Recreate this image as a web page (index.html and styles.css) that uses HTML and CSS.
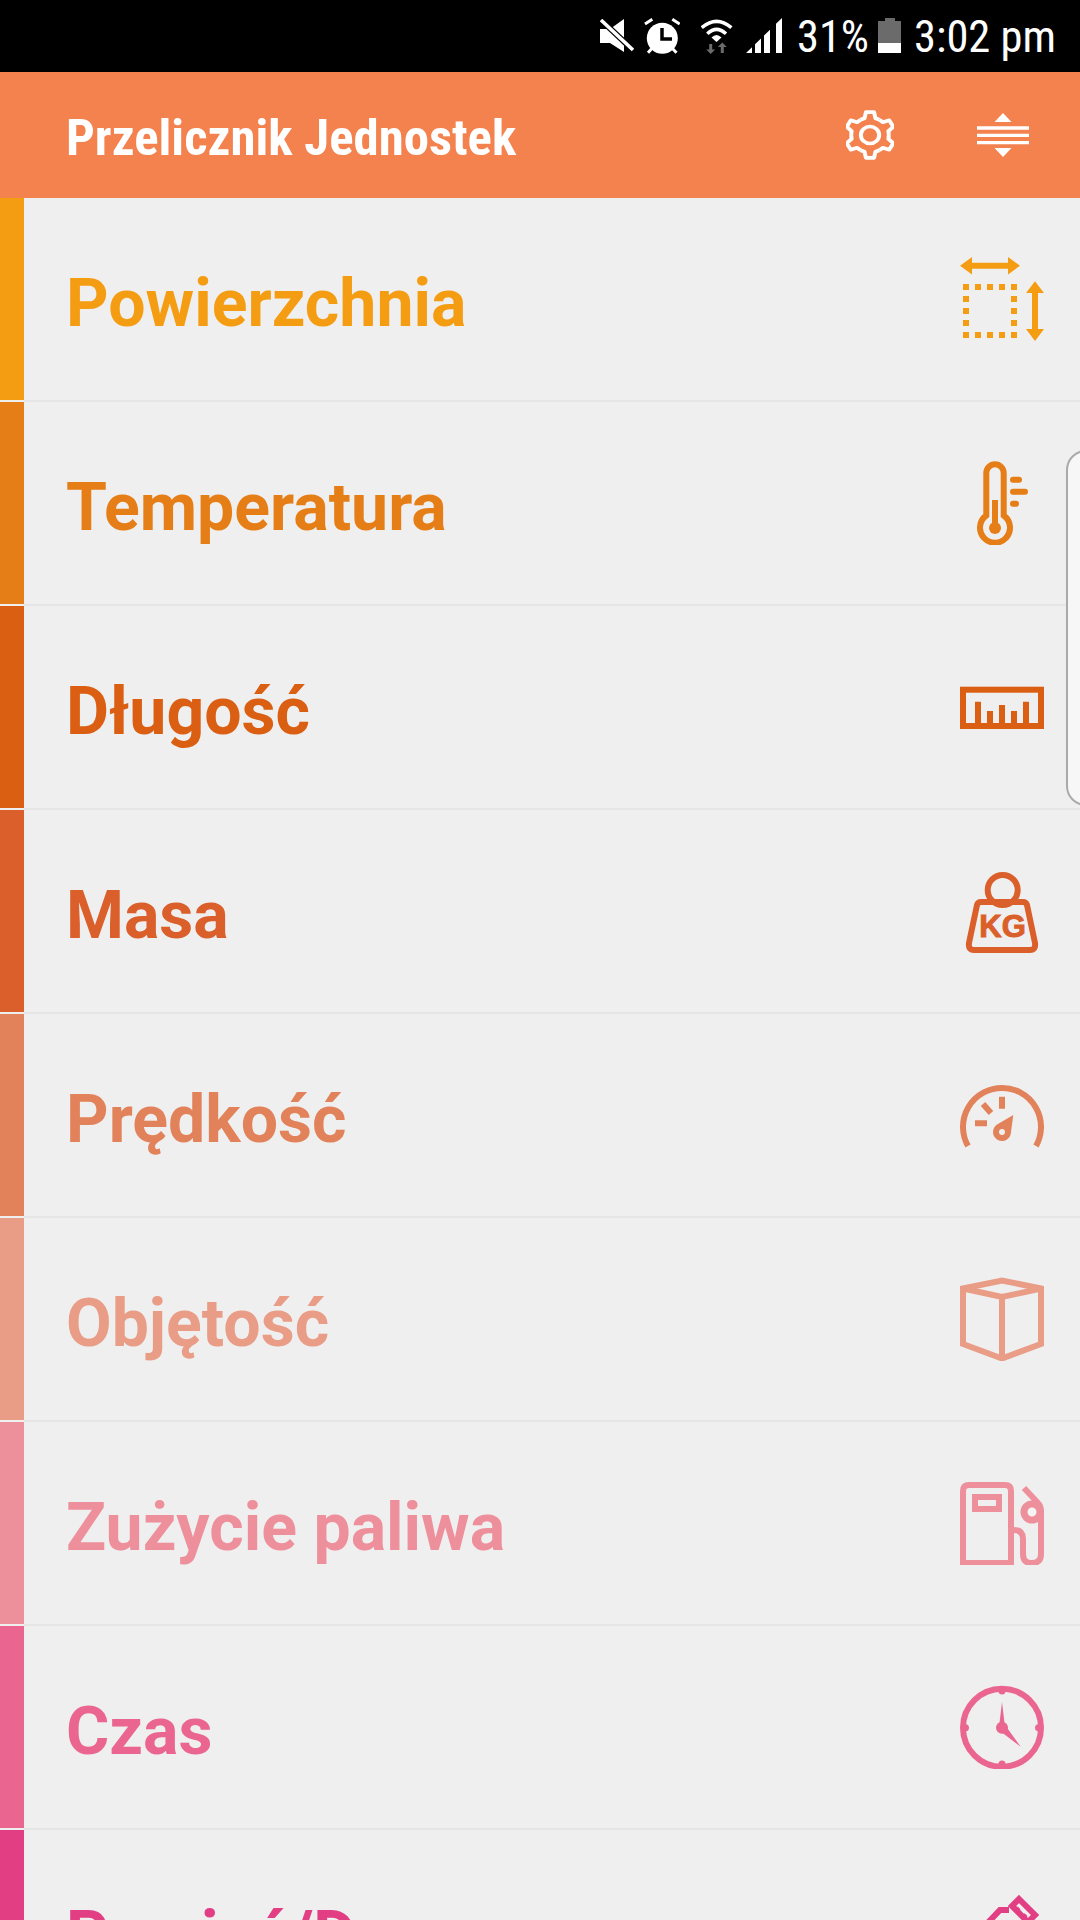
FILE: index.html
```html
<!DOCTYPE html>
<html lang="pl">

<head>
    <meta charset="UTF-8">
    <meta name="viewport" content="width=device-width, initial-scale=1.0">
    <title>Przelicznik Jednostek</title>
    <link rel="stylesheet" href="styles.css">
</head>

<body>
    <div class="page">
        <div class="status-bar">
            <svg class="st-mute" width="34" height="34" viewBox="0 0 34 34">
                <path d="M0 10H10L24 0V33L10 24H0Z" fill="#fff" />
                <path d="M0 0L34 32" stroke="#000" stroke-width="6" />
                <path d="M1 1L33 31" stroke="#fff" stroke-width="3.5" />
            </svg>
            <svg class="st-alarm" width="36" height="36" viewBox="0 0 36 36">
                <circle cx="18.3" cy="20.3" r="15.5" fill="#fff" />
                <path d="M1 6L8.3 1.3M28.3 1.3L35.7 6M4 34.7L8.3 30M32.5 34.7L28 30" stroke="#fff" stroke-width="3" />
                <path d="M18 10V21H28" fill="none" stroke="#000" stroke-width="3.5" />
            </svg>
            <svg class="st-wifi" width="32" height="36" viewBox="0 0 32 36">
                <path d="M0.8 9.7Q15.5 -3 30.4 9.7M6.3 15.7Q15.5 7 25 15.7" fill="none" stroke="#fff" stroke-width="3.5" />
                <path d="M10.5 19.5Q15.5 14.5 20.5 19.5L15.5 24Z" fill="#fff" />
                <path d="M8.2 26V31.5H5.2L9.7 36L14.2 31.5H11.2V26ZM19.8 35V29H16.8L21.3 24.5L25.8 29H22.8V35Z" fill="#6b6b6b" />
            </svg>
            <svg class="st-signal" width="36" height="36" viewBox="0 0 36 36">
                <path d="M0 35H6V29.2ZM9 35H15V20.4L9 26.2ZM18 35H24V11.7L18 17.5ZM30 35H36V0L30 5.8Z" fill="#fff" />
            </svg>
            <span class="st-percent">31%</span>
            <svg class="st-battery" width="23" height="36" viewBox="0 0 23 36">
                <path d="M7 0H17V3H23V25H0V3H7Z" fill="#6b6b6b" />
                <rect x="0" y="25" width="23" height="10" fill="#fff" />
            </svg>
            <span class="st-time">3:02 pm</span>
        </div>

        <header class="app-bar">
            <h1 class="app-title">Przelicznik Jednostek</h1>
            <svg class="gear" width="48" height="50" viewBox="3 0.5 42 47" preserveAspectRatio="none">
                <g fill="none" stroke="#fff" stroke-width="3.5" stroke-linejoin="round">
                    <path id="tooth" d="M15.75 9.71L19.18 8.22L20.5 2.5H27.5L28.82 8.22L32.25 9.71" />
                    <use href="#tooth" transform="rotate(60 24 24)" />
                    <use href="#tooth" transform="rotate(120 24 24)" />
                    <use href="#tooth" transform="rotate(180 24 24)" />
                    <use href="#tooth" transform="rotate(240 24 24)" />
                    <use href="#tooth" transform="rotate(300 24 24)" />
                    <circle cx="24" cy="24" r="8" />
                </g>
            </svg>
            <svg class="sort" width="52" height="46" viewBox="0 0 52 46">
                <path d="M17.5 10L26 1L34.5 10ZM17.5 36L26 45L34.5 36Z" fill="#fff" />
                <path d="M0 16H52M0 23.3H52M0 30.7H52" stroke="#fff" stroke-width="3.3" />
            </svg>
        </header>

        <div class="edge-handle"></div>

        <main class="list">
            <div class="row c-area">
                <div class="stripe"></div>
                <div class="row-body">
                    <span class="label">Powierzchnia</span>
                    <svg class="icon" width="84" height="84" viewBox="0 0 84 84">
                        <path class="fill" d="M0 8.7L12 0V5.7H48V0L60 8.7L48 17.4V11.7H12V17.4Z" />
                        <path class="fill" d="M75 24.3L84 36H78V72H84L75 84L66 72H72V36H66Z" />
                        <rect class="line" x="6" y="30" width="48" height="48" stroke-dasharray="6 6" stroke-dashoffset="3" />
                    </svg>
                </div>
            </div>
            <div class="row c-temp">
                <div class="stripe"></div>
                <div class="row-body">
                    <span class="label">Temperatura</span>
                    <svg class="icon" width="84" height="84" viewBox="0 0 84 84">
                        <path class="line" d="M26.3 54.5V12a8.7 8.7 0 0 1 17.4 0V54.5A15 15 0 1 1 26.3 54.5Z" />
                        <path class="line" d="M35 39V66" />
                        <circle class="fill" cx="35" cy="67" r="6" />
                        <path class="line round" d="M53 18.7H59M53 30.7H65M53 42.7H56" />
                    </svg>
                </div>
            </div>
            <div class="row c-length">
                <div class="stripe"></div>
                <div class="row-body">
                    <span class="label">Długość</span>
                    <svg class="icon" width="84" height="84" viewBox="0 0 84 84">
                        <rect class="line" x="3" y="24.7" width="78" height="36.3" />
                        <path class="line" d="M18 36.7V61M30 46V61M42 40V61M54 46V61M66 36.7V61" />
                    </svg>
                </div>
            </div>
            <div class="row c-mass">
                <div class="stripe"></div>
                <div class="row-body">
                    <span class="label">Masa</span>
                    <svg class="icon" width="84" height="84" viewBox="0 0 84 84">
                        <circle class="line" cx="42.7" cy="21" r="15" />
                        <path class="line" d="M21 33H63Q66 33 67 36L75 74Q76 81 70 81H14Q8 81 9 74L17 36Q18 33 21 33Z" />
                        <text class="kg" x="42.5" y="68.3" text-anchor="middle">KG</text>
                    </svg>
                </div>
            </div>
            <div class="row c-speed">
                <div class="stripe"></div>
                <div class="row-body">
                    <span class="label">Prędkość</span>
                    <svg class="icon" width="84" height="84" viewBox="0 0 84 84">
                        <path class="line" d="M8 73A39 39 0 1 1 76 73" />
                        <path class="line" d="M42 23.7V35.7M15 50.3H27M23 31L31 40" />
                        <path class="fill" d="M53.3 42L51 59A9 9 0 1 1 37 51.5Z" />
                        <circle class="hole" cx="42" cy="59" r="3" />
                    </svg>
                </div>
            </div>
            <div class="row c-volume">
                <div class="stripe"></div>
                <div class="row-body">
                    <span class="label">Objętość</span>
                    <svg class="icon" width="84" height="84" viewBox="0 0 84 84">
                        <path class="line" d="M3 11.5L42 3.5L81 11.5V67L42 81.5L3 67Z" />
                        <path class="line" d="M3 11.5L42 20L81 11.5M42 20V82" />
                    </svg>
                </div>
            </div>
            <div class="row c-fuel">
                <div class="stripe"></div>
                <div class="row-body">
                    <span class="label">Zużycie paliwa</span>
                    <svg class="icon" width="84" height="84" viewBox="0 0 84 84">
                        <path class="line" d="M3 82V10Q3 4 9 4H45Q51 4 51 10V82Z" />
                        <rect class="line" x="15" y="16" width="24" height="12" />
                        <path class="line" d="M64 7L78 22Q81 25 81 30V73Q81 82 72 82H71Q63 82 63 73V58Q63 49 54 49" />
                        <circle class="line ring" cx="72" cy="31" r="8" />
                    </svg>
                </div>
            </div>
            <div class="row c-time">
                <div class="stripe"></div>
                <div class="row-body">
                    <span class="label">Czas</span>
                    <svg class="icon" width="84" height="84" viewBox="0 0 84 84">
                        <circle class="line" cx="42" cy="42.7" r="39" />
                        <circle class="fill" cx="42" cy="6" r="3.5" />
                        <circle class="fill" cx="42" cy="79" r="3.5" />
                        <circle class="fill" cx="5.5" cy="42.7" r="3.5" />
                        <circle class="fill" cx="78.5" cy="42.7" r="3.5" />
                        <circle class="fill" cx="42" cy="42.7" r="6" />
                        <path class="fill" d="M42 17L45 42H39ZM60.7 61.7L40 46L45 40Z" />
                    </svg>
                </div>
            </div>
            <div class="row c-data">
                <div class="stripe"></div>
                <div class="row-body">
                    <span class="label">Pamięć/Dane</span>
                    <svg class="icon" width="84" height="84" viewBox="0 0 84 84">
                        <path class="line" d="M59 10L75 26L68 33L52 17Z" />
                        <path class="line" d="M49 21H40L19 43L43 67L64 46" />
                        <path class="fill" d="M57.7 17.5L60.5 20.3L57.7 23.1L54.9 20.3ZM64.7 24.2L67.5 27L64.7 29.8L61.9 27Z" />
                    </svg>
                </div>
            </div>
        </main>
    </div>
</body>

</html>
```

FILE: styles.css
```css
* {
    box-sizing: border-box;
}

body {
    margin: 0;
    background-color: #efefef;
    font-family: Roboto, "Liberation Sans", sans-serif;
}

.page {
    position: relative;
    width: 1080px;
    height: 1920px;
    overflow: hidden;
}

/* status bar */
.status-bar {
    display: flex;
    align-items: center;
    justify-content: flex-end;
    height: 72px;
    padding-right: 24px;
    background-color: #000;
    color: #fff;
}

.st-mute {
    margin-right: 10px;
}

.st-alarm {
    margin-right: 21px;
}

.st-wifi {
    margin-right: 13px;
}

.st-signal {
    margin-right: 15px;
}

.st-percent,
.st-time {
    padding-top: 2px;
    font-size: 44.5px;
    font-stretch: condensed;
    white-space: nowrap;
}

.st-percent {
    margin-right: 9px;
}

.st-battery {
    margin-right: 13px;
}

/* app bar */
.app-bar {
    display: flex;
    align-items: center;
    height: 126px;
    padding: 0 51px 0 66px;
    background-color: #f4824f;
}

.app-title {
    flex: 1;
    margin: 0;
    padding-top: 4px;
    font-size: 50.8px;
    font-weight: 700;
    font-stretch: condensed;
    color: #fff;
}

.gear {
    margin-right: 83px;
}

/* samsung edge panel handle */
.edge-handle {
    position: absolute;
    top: 450px;
    left: 1066px;
    width: 40px;
    height: 356px;
    background-color: #f7f7f7;
    border: 2px solid #aaa;
    border-radius: 20px;
}

/* list */
.row {
    display: flex;
    height: 204px;
}

.stripe {
    width: 24px;
    margin-bottom: 2px;
    background-color: currentColor;
}

.row-body {
    flex: 1;
    display: flex;
    align-items: center;
    justify-content: space-between;
    padding: 0 36px 0 42px;
    border-bottom: 2px solid #e5e5e5;
}

.label {
    padding-top: 8px;
    font-size: 66.2px;
    font-weight: 700;
}

.line {
    fill: none;
    stroke: currentColor;
    stroke-width: 6;
}

.round {
    stroke-linecap: round;
}

.ring {
    fill: #f4f4f4;
    stroke-width: 7;
}

.fill {
    fill: currentColor;
}

.hole {
    fill: #efefef;
}

.kg {
    font-family: "Liberation Sans", sans-serif;
    font-size: 31px;
    font-weight: 700;
    fill: currentColor;
    stroke: currentColor;
    stroke-width: 1;
}

.c-area {
    color: #f49d13;
}

.c-temp {
    color: #e67e17;
}

.c-length {
    color: #da5f12;
}

.c-mass {
    color: #da5f2b;
}

.c-speed {
    color: #e2825b;
}

.c-volume {
    color: #e99d86;
}

.c-fuel {
    color: #ee8f9c;
}

.c-time {
    color: #ea6690;
}

.c-data {
    color: #e23e84;
}
```
